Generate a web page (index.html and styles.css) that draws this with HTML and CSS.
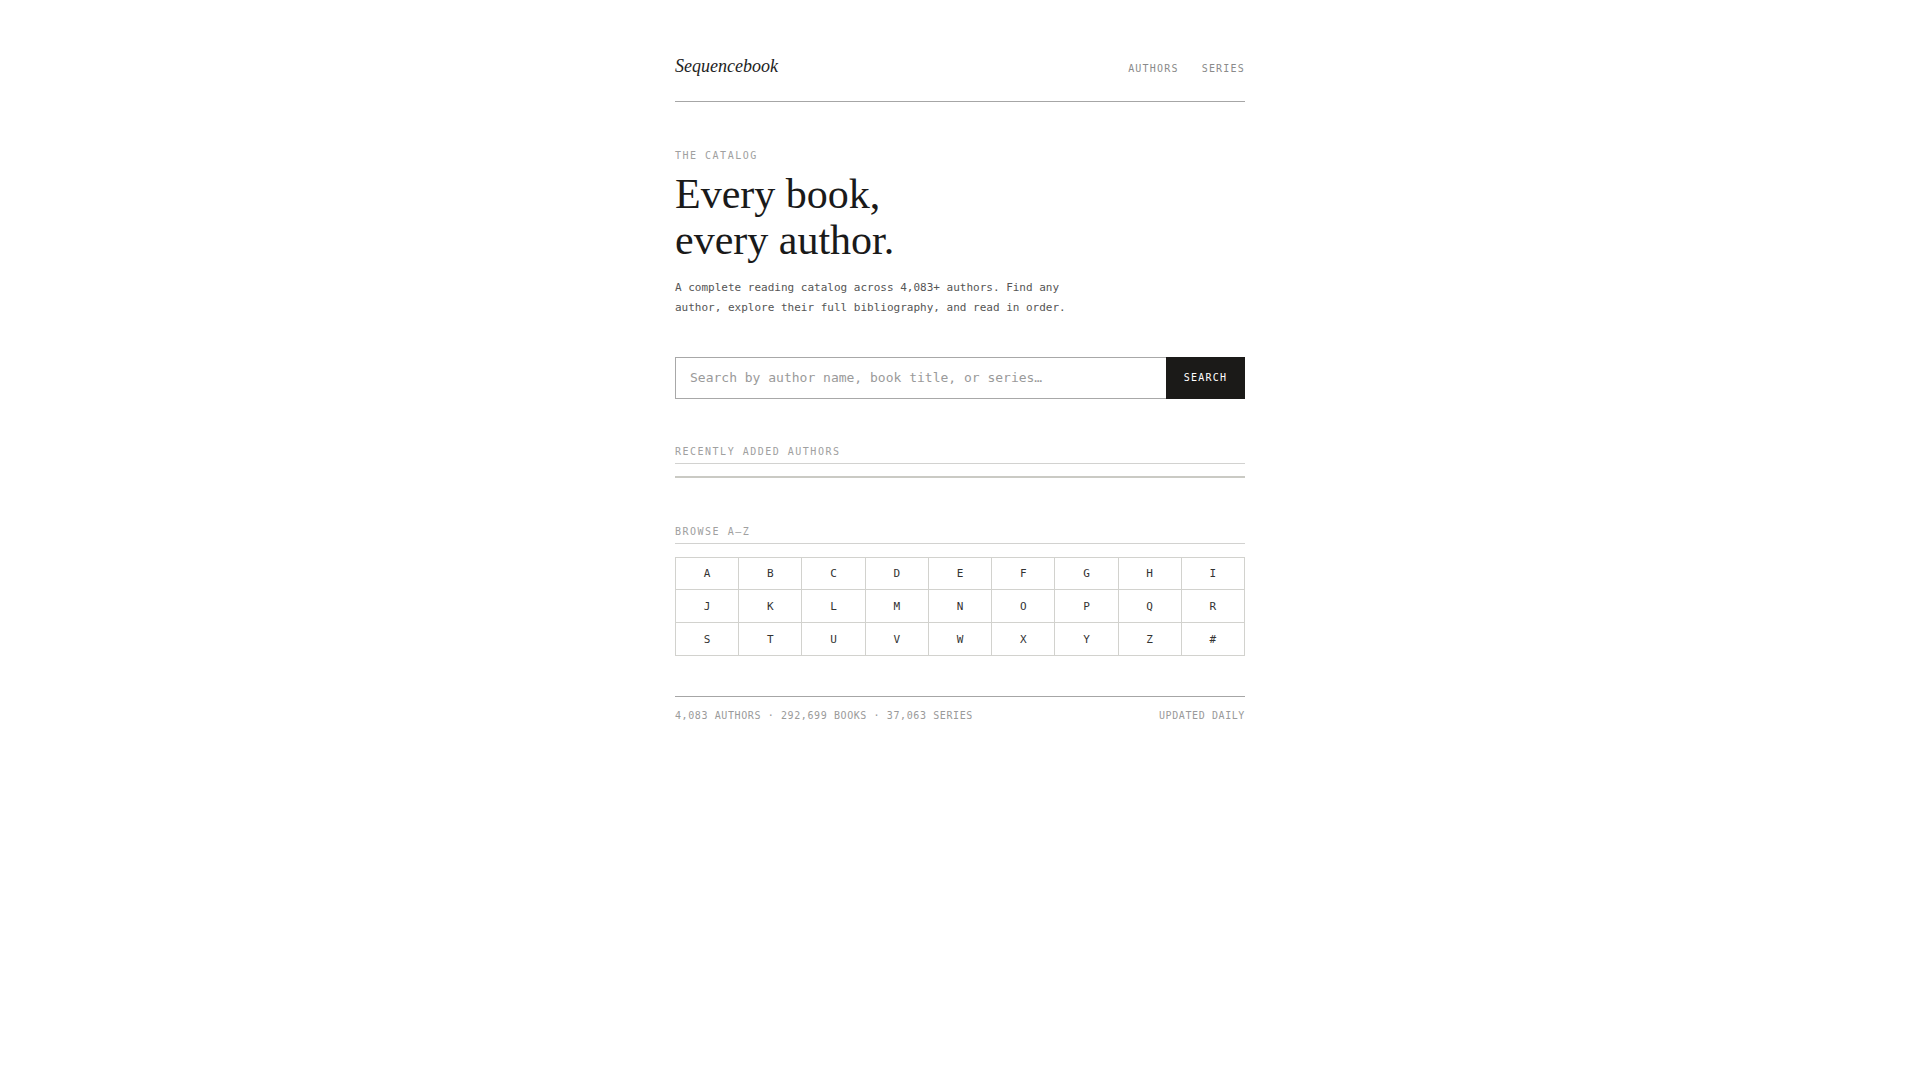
FILE: index.html
```html
<!DOCTYPE html>
<html lang="en">
<head>
<meta charset="utf-8">
<title>Sequencebook</title>
<link rel="stylesheet" href="styles.css">
</head>
<body>
<div class="page">
  <header class="site-header">
    <a class="logo" href="#">Sequencebook</a>
    <nav class="nav">
      <a href="#">AUTHORS</a>
      <a href="#">SERIES</a>
    </nav>
  </header>

  <section class="hero">
    <div class="eyebrow">THE CATALOG</div>
    <h1 class="title">Every book,<br>every author.</h1>
    <p class="lede">A complete reading catalog across 4,083+ authors. Find any author, explore their full bibliography, and read in order.</p>
  </section>

  <form class="search">
    <input class="search-input" type="text" placeholder="Search by author name, book title, or series…">
    <button class="search-btn" type="button">SEARCH</button>
  </form>

  <section class="recent">
    <div class="section-label">RECENTLY ADDED AUTHORS</div>
    <div class="recent-list"></div>
  </section>

  <section class="browse">
    <div class="section-label">BROWSE A–Z</div>
    <div class="az-grid">
      <a href="#">A</a><a href="#">B</a><a href="#">C</a><a href="#">D</a><a href="#">E</a><a href="#">F</a><a href="#">G</a><a href="#">H</a><a href="#">I</a>
      <a href="#">J</a><a href="#">K</a><a href="#">L</a><a href="#">M</a><a href="#">N</a><a href="#">O</a><a href="#">P</a><a href="#">Q</a><a href="#">R</a>
      <a href="#">S</a><a href="#">T</a><a href="#">U</a><a href="#">V</a><a href="#">W</a><a href="#">X</a><a href="#">Y</a><a href="#">Z</a><a href="#">#</a>
    </div>
  </section>

  <footer class="site-footer">
    <span>4,083 AUTHORS · 292,699 BOOKS · 37,063 SERIES</span>
    <span>UPDATED DAILY</span>
  </footer>
</div>
</body>
</html>
```

FILE: styles.css
```css
* { box-sizing: border-box; }

html, body {
  margin: 0;
  padding: 0;
  background: #ffffff;
}

body {
  font-family: "DejaVu Sans Mono", "Liberation Mono", monospace;
  color: #222;
}

a { color: inherit; text-decoration: none; }

.page {
  width: 570px;
  margin: 0 auto;
}

.site-header {
  display: flex;
  justify-content: space-between;
  align-items: baseline;
  padding: 54px 0 23px;
  border-bottom: 1px solid #a6a6a6;
}

.logo {
  font-family: "Liberation Serif", "Times New Roman", serif;
  font-style: italic;
  font-size: 18px;
  line-height: 24px;
  color: #222;
}

.nav {
  display: flex;
  gap: 23px;
}

.nav a {
  font-size: 10px;
  line-height: 14px;
  letter-spacing: 0.12em;
  color: #8a8a8a;
}

.hero {
  padding-top: 47px;
}

.eyebrow,
.section-label {
  font-size: 10px;
  line-height: 14px;
  letter-spacing: 0.15em;
  color: #a0a0a0;
}

.title {
  margin: 8px 0 0;
  font-family: "Liberation Serif", "Times New Roman", serif;
  font-weight: normal;
  font-size: 42px;
  line-height: 46px;
  color: #1a1a1a;
}

.lede {
  margin: 15px 0 0;
  max-width: 420px;
  font-size: 11px;
  line-height: 19.8px;
  color: #555;
}

.search {
  display: flex;
  margin-top: 39px;
  height: 42px;
}

.search-input {
  flex: 1;
  min-width: 0;
  border: 1px solid #a8a8a8;
  border-right: none;
  padding: 0 14px;
  font-family: "DejaVu Sans Mono", "Liberation Mono", monospace;
  font-size: 13px;
  color: #222;
  background: #fff;
  outline: none;
}

.search-input::placeholder {
  color: #9a9a9a;
}

.search-btn {
  width: 79px;
  border: none;
  background: #1b1a18;
  color: #fff;
  font-family: "DejaVu Sans Mono", "Liberation Mono", monospace;
  font-size: 10px;
  letter-spacing: 0.12em;
  padding: 0;
  cursor: pointer;
}

.recent {
  margin-top: 46px;
}

.section-label {
  padding-bottom: 4px;
  border-bottom: 1px solid #d2d2d0;
}

.recent-list {
  margin-top: 12px;
  border-top: 2px solid #cacac4;
}

.browse {
  margin-top: 47px;
}

.az-grid {
  margin-top: 13px;
  display: grid;
  grid-template-columns: repeat(9, 1fr);
  border-top: 1px solid #d2d2ce;
  border-left: 1px solid #d2d2ce;
}

.az-grid a {
  display: flex;
  align-items: center;
  justify-content: center;
  height: 32.8px;
  border-right: 1px solid #d2d2ce;
  border-bottom: 1px solid #d2d2ce;
  font-size: 11px;
  color: #333;
}

.site-footer {
  display: flex;
  justify-content: space-between;
  margin-top: 40px;
  padding-top: 12px;
  border-top: 1px solid #a6a6a6;
  font-size: 10px;
  line-height: 14px;
  letter-spacing: 0.06em;
  color: #9a9a9a;
}
```
